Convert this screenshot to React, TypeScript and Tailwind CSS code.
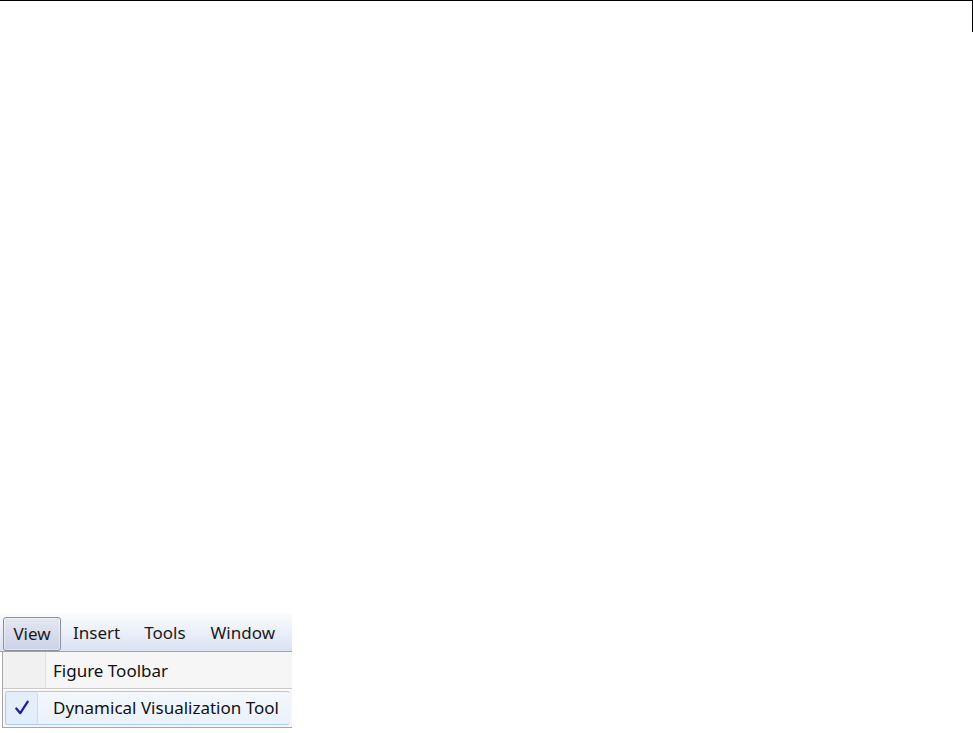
import React from "react";

export default function App() {
  return (
    <div className="w-[973px] h-[733px] bg-white flex flex-col overflow-hidden" style={{ fontFamily: '"Noto Sans", "Open Sans", sans-serif' }}>
      <div className="w-[973px] h-[32px] border-t border-r border-black shrink-0" />
      <div className="mt-[581px] w-[292px] flex flex-col">
        {/* menu bar */}
        <div className="h-[38px] flex items-center bg-gradient-to-b from-[#fbfcfe] to-[#dbe2f2] text-[17px] text-[#1a1a1a]">
          <div className="ml-[3px] w-[58px] h-[34px] mt-[3px] flex items-center justify-center rounded-[3px] border border-[#8a8f9c] bg-gradient-to-b from-[#e4e7f1] to-[#ccd2e6] shadow-[inset_0_0_0_1px_rgba(255,255,255,0.5)]">
            View
          </div>
          <span className="ml-[12px] mt-[1px]">Insert</span>
          <span className="ml-[24px] mt-[1px]">Tools</span>
          <span className="ml-[25px] mt-[1px]">Window</span>
        </div>
        <div className="h-[1px] bg-[#9da3ad]" />
        {/* menu body */}
        <div className="flex flex-col bg-[#f6f6f6] border-l border-b border-[#a7a7a7] ml-[2px] text-[17px] text-[#111]">
          <div className="h-[36px] flex items-stretch">
            <div className="w-[43px] border-r border-[#e2e2e2] bg-[#f1f1f1]" />
            <div className="flex items-center pl-[7px] pt-[2px]">Figure Toolbar</div>
          </div>
          <div className="h-[1px] bg-[#c9c9c9]" />
          <div className="h-[1px] bg-white" />
          <div className="h-[34px] mx-[2px] mb-[2px] mt-[1px] flex items-stretch rounded-[3px] border border-[#a9cdf0] border-r-0 bg-gradient-to-b from-[#f4f8fd] to-[#e9f1fb]">
            <div className="w-[32px] rounded-[3px] border-r border-[#c3dcf4] bg-[#e4eefa] flex items-center justify-center">
              <svg width="16" height="16" viewBox="0 0 14 14">
                <path d="M2 7.5 L5.5 11.5 L12 1.5" fill="none" stroke="#1f1f9a" strokeWidth="2" strokeLinecap="round" strokeLinejoin="round" />
              </svg>
            </div>
            <div className="flex items-center pl-[15px]">Dynamical Visualization Tool</div>
          </div>
        </div>
      </div>
    </div>
  );
}
